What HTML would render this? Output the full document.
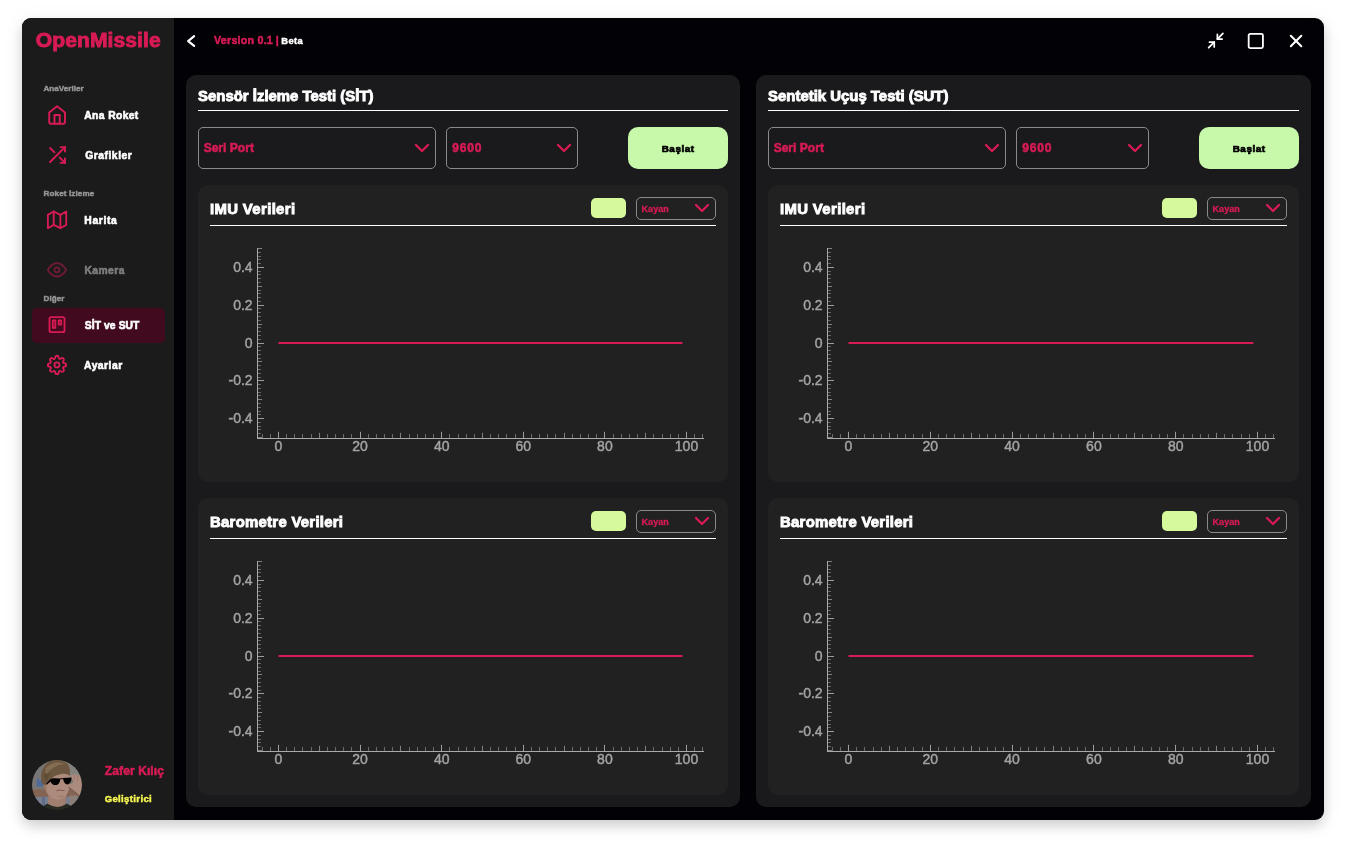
<!DOCTYPE html>
<html lang="tr"><head><meta charset="utf-8"><title>OpenMissile</title>
<style>
html,body{margin:0;padding:0;background:#ffffff;}
body{width:1346px;height:846px;overflow:hidden;position:relative;font-family:"Liberation Sans",sans-serif;font-weight:700;}
#win{will-change:transform;position:absolute;left:22px;top:18px;width:1302px;height:802px;background:#010106;border-radius:9px;
 box-shadow:0 6px 13px rgba(0,0,0,0.17),0 3px 24px rgba(0,0,0,0.05);}
.t{position:absolute;white-space:nowrap;display:block;}
.b{position:absolute;}
.ic{position:absolute;display:block;overflow:visible;}
</style></head><body>
<div id="win">
<div class="b" style="left:0.00px;top:0.00px;width:152.00px;height:802.00px;background:#1b1b1b;border-radius:9px 0 0 9px;"></div>
<span id="t0" class="t " style="left:13.75px;top:11.00px;font-size:21.1px;line-height:21.1px;color:#d81b55;letter-spacing:0.066px;-webkit-text-stroke:0.9px #d81b55;">OpenMissile</span>
<span id="t1" class="t " style="left:21.44px;top:67.00px;font-size:8.1px;line-height:8.1px;color:#979797;letter-spacing:0.031px;-webkit-text-stroke:0.4px #979797;">AnaVeriler</span>
<span id="t2" class="t " style="left:21.50px;top:172.00px;font-size:8.1px;line-height:8.1px;color:#979797;letter-spacing:0.115px;-webkit-text-stroke:0.4px #979797;">Roket İzleme</span>
<span id="t3" class="t " style="left:21.62px;top:277.00px;font-size:8.1px;line-height:8.1px;color:#979797;letter-spacing:0.052px;-webkit-text-stroke:0.4px #979797;">Diğer</span>
<div class="b" style="left:10.00px;top:290.00px;width:133.00px;height:35.00px;background:#420a1e;border-radius:5px;"></div>
<svg class="ic" style="left:24px;top:86px;" width="21" height="21" viewBox="0 0 24 24" fill="none" stroke="#d81b55" stroke-width="2.2" stroke-linecap="round" stroke-linejoin="round"><g transform="translate(0.686 0.629)"><path d="M3 9l9-7 9 7v11a2 2 0 0 1-2 2H5a2 2 0 0 1-2-2z"/><polyline points="9 22 9 12 15 12 15 22"/></g></svg>
<span id="t4" class="t " style="left:62.27px;top:93.00px;font-size:10.3px;line-height:10.3px;color:#ffffff;letter-spacing:0.388px;-webkit-text-stroke:0.6px #ffffff;">Ana Roket</span>
<svg class="ic" style="left:24px;top:126px;" width="21" height="21" viewBox="0 0 24 24" fill="none" stroke="#d81b55" stroke-width="2.2" stroke-linecap="round" stroke-linejoin="round"><g transform="translate(0.686 0.571)"><polyline points="16 3 21 3 21 8"/><line x1="4" y1="20" x2="21" y2="3"/><polyline points="21 16 21 21 16 21"/><line x1="15" y1="15" x2="21" y2="21"/><line x1="4" y1="4" x2="9" y2="9"/></g></svg>
<span id="t5" class="t " style="left:63.14px;top:133.00px;font-size:10.3px;line-height:10.3px;color:#ffffff;letter-spacing:0.541px;-webkit-text-stroke:0.6px #ffffff;">Grafikler</span>
<svg class="ic" style="left:25px;top:191px;" width="20" height="20" viewBox="0 0 24 24" fill="none" stroke="#d81b55" stroke-width="2.2" stroke-linecap="round" stroke-linejoin="round"><g transform="translate(0.060 1.020)"><polygon points="1 6 1 22 8 18 16 22 23 18 23 2 16 6 8 2 1 6"/><line x1="8" y1="2" x2="8" y2="18"/><line x1="16" y1="6" x2="16" y2="22"/></g></svg>
<span id="t6" class="t " style="left:62.37px;top:198.00px;font-size:10.3px;line-height:10.3px;color:#ffffff;letter-spacing:0.626px;-webkit-text-stroke:0.6px #ffffff;">Harita</span>
<svg class="ic" style="left:24px;top:241px;opacity:0.45;" width="20" height="20" viewBox="0 0 24 24" fill="none" stroke="#d81b55" stroke-width="2.2" stroke-linecap="round" stroke-linejoin="round"><g transform="translate(1.140 1.020)"><path d="M1 12s4-8 11-8 11 8 11 8-4 8-11 8-11-8-11-8z"/><circle cx="12" cy="12" r="3"/></g></svg>
<span id="t7" class="t " style="left:62.45px;top:248.00px;font-size:10.3px;line-height:10.3px;color:#7d7d7d;letter-spacing:0.454px;-webkit-text-stroke:0.6px #7d7d7d;">Kamera</span>
<svg class="ic" style="left:25px;top:296px;" width="20" height="20" viewBox="0 0 24 24" fill="none" stroke="#d81b55" stroke-width="2.2" stroke-linecap="round" stroke-linejoin="round"><g transform="translate(0.000 0.660)"><rect x="3" y="3" width="18" height="18" rx="2" ry="2"/><rect x="7" y="7" width="3" height="9"/><rect x="14" y="7" width="3" height="5"/></g></svg>
<span id="t8" class="t " style="left:62.82px;top:303.00px;font-size:10.3px;line-height:10.3px;color:#ffffff;letter-spacing:0.089px;-webkit-text-stroke:0.6px #ffffff;">SİT ve SUT</span>
<svg class="ic" style="left:24px;top:336px;" width="20" height="20" viewBox="0 0 24 24" fill="none" stroke="#d81b55" stroke-width="2.2" stroke-linecap="round" stroke-linejoin="round"><g transform="translate(1.140 1.140)"><circle cx="12" cy="12" r="3"/><path d="M19.4 15a1.65 1.65 0 0 0 .33 1.82l.06.06a2 2 0 0 1 0 2.83 2 2 0 0 1-2.83 0l-.06-.06a1.65 1.65 0 0 0-1.82-.33 1.65 1.65 0 0 0-1 1.51V21a2 2 0 0 1-2 2 2 2 0 0 1-2-2v-.09A1.65 1.65 0 0 0 9 19.4a1.65 1.65 0 0 0-1.82.33l-.06.06a2 2 0 0 1-2.83 0 2 2 0 0 1 0-2.83l.06-.06a1.65 1.65 0 0 0 .33-1.82 1.65 1.65 0 0 0-1.51-1H3a2 2 0 0 1-2-2 2 2 0 0 1 2-2h.09A1.65 1.65 0 0 0 4.6 9a1.65 1.65 0 0 0-.33-1.82l-.06-.06a2 2 0 0 1 0-2.83 2 2 0 0 1 2.83 0l.06.06a1.65 1.65 0 0 0 1.82.33H9a1.65 1.65 0 0 0 1-1.51V3a2 2 0 0 1 2-2 2 2 0 0 1 2 2v.09a1.65 1.65 0 0 0 1 1.51 1.65 1.65 0 0 0 1.82-.33l.06-.06a2 2 0 0 1 2.83 0 2 2 0 0 1 0 2.83l-.06.06a1.65 1.65 0 0 0-.33 1.82V9a1.65 1.65 0 0 0 1.51 1H21a2 2 0 0 1 2 2 2 2 0 0 1-2 2h-.09a1.65 1.65 0 0 0-1.51 1z"/></g></svg>
<span id="t9" class="t " style="left:62.09px;top:343.00px;font-size:10.3px;line-height:10.3px;color:#ffffff;letter-spacing:0.501px;-webkit-text-stroke:0.6px #ffffff;">Ayarlar</span>
<svg class="ic" style="left:10px;top:742px" width="50" height="50" viewBox="0 0 50 50">
<defs><clipPath id="avc"><circle cx="25" cy="25" r="25"/></clipPath>
<filter id="avb" x="-10%" y="-10%" width="120%" height="120%"><feGaussianBlur stdDeviation="0.75"/></filter>
<filter id="avs" x="-10%" y="-10%" width="120%" height="120%"><feGaussianBlur stdDeviation="0.4"/></filter></defs>
<g clip-path="url(#avc)"><g filter="url(#avb)">
<rect x="-3" y="-3" width="56" height="56" fill="#8b8a87"/>
<rect x="33" y="-3" width="20" height="20" fill="#9a9893"/>
<rect x="-3" y="29.5" width="56" height="7.5" fill="#9a7460"/>
<rect x="-3" y="36.8" width="56" height="9" fill="#8a93a8"/>
<rect x="37.5" y="35.5" width="8" height="9.5" fill="#a3968c"/>
<rect x="10" y="37" width="3" height="8" fill="#6f7f9f"/>
<path d="M4.4 26.6 L4.8 19 Q5 17.8 6.5 18.3 L8 21.3 L9.6 18.4 Q10.8 18 10.9 19.5 L11 26.6z" fill="#5b7ab3"/>
<path d="M8 50 Q10 45.5 16 43.5 L34 43.5 Q40 45 42 50 L42 54 L8 54z" fill="#2a2f28"/>
<path d="M16.5 34 L16 44 Q25 49.5 33.5 44.5 L34.5 33z" fill="#bd9482"/>
<path d="M13.2 21 Q12.3 29 15.5 34 Q19.5 39.5 26 39.8 Q31.5 39.5 34.8 34.5 Q37.6 30 37.6 24 L37.4 14 Q27 9 16 13z" fill="#caa18f"/>
<path d="M24.5 30.6 Q28.5 29.4 32.5 30.8" stroke="#8f5f55" stroke-width="0.9" fill="none"/>
<path d="M26.5 36.5 Q29 37.4 32 36" stroke="#b08674" stroke-width="0.8" fill="none"/>
<path d="M12.3 23.2 Q10.6 27.5 13.2 30.2 L14.6 29 L14.2 23z" fill="#b48873"/>
<path d="M9.4 22 Q7 9 16.5 2 Q27 -2.8 35.4 3.6 Q39 8.4 37.7 15.8 Q34.5 12.8 28 14.2 Q21 15.8 17.8 20.2 Q16 23.4 15.4 24.4 L12 24.8 Q10.2 24.6 9.4 22z" fill="#7f6549"/>
<path d="M13.5 8 Q22 -0.5 33 4 Q27 4 21 8 Q17 10.5 14 15z" fill="#9a805f"/>
<path d="M12 14 Q12.5 20 15 22.5 Q15 17 19 13z" fill="#6f573d"/>
<path d="M38 18.6 Q38 15 40.5 14.8 Q43 13.6 45.4 15 Q48.3 15.4 49.3 18.6 Q50.6 24 49.8 30 Q49 35.4 46.4 35.2 Q41 31 36.8 27.4 L37.4 24 Q41.6 24.4 41 20.6 Q40 19.6 38 18.6z" fill="#c9a392"/>
<path d="M36.6 27.2 Q41 30.4 46.8 35.2" stroke="#7b4d44" stroke-width="0.9" fill="none"/>
<path d="M42.5 15 L42.2 20 M45.6 15.6 L45.3 21" stroke="#a97f6f" stroke-width="0.6" fill="none"/>
<rect x="-3" y="-3" width="56" height="56" fill="#141414" opacity="0.16"/></g>
<g filter="url(#avs)">
<path d="M14 23.9 L18.2 19.2 Q19.6 17.9 23 18.2 L28.2 18.6 Q28.4 23.6 24.8 25 Q20.4 25.8 18.6 21.4 L15 24.6z" fill="#040404"/>
<path d="M31 18 L39.6 17.4 Q39.6 22.6 35.8 24.4 Q31.8 24.6 31 18z" fill="#040404"/>
<path d="M28 18.9 L31.4 18.5" stroke="#040404" stroke-width="0.9"/>
</g>
</g></svg>
<span id="t10" class="t " style="left:82.83px;top:747.00px;font-size:12px;line-height:12px;color:#d81b55;letter-spacing:0.105px;-webkit-text-stroke:0.55px #d81b55;">Zafer Kılıç</span>
<span id="t11" class="t " style="left:82.63px;top:776.00px;font-size:9.6px;line-height:9.6px;color:#f7f752;letter-spacing:0.338px;-webkit-text-stroke:0.45px #f7f752;">Geliştirici</span>
<svg class="ic" style="left:158px;top:12px;" width="21" height="21" viewBox="0 0 24 24" fill="none" stroke="#ffffff" stroke-width="2.5" stroke-linecap="round" stroke-linejoin="round"><g transform="translate(0.743 0.629)"><polyline points="15.4 17.6 8.6 12 15.4 6.4"/></g></svg>
<span id="t12" class="t " style="left:192.05px;top:17.00px;font-size:10.7px;line-height:10.7px;color:#d81b55;letter-spacing:0.233px;-webkit-text-stroke:0.55px #d81b55;">Version 0.1</span>
<span id="t13" class="t " style="left:253.68px;top:17.00px;font-size:10.7px;line-height:10.7px;color:#d81b55;letter-spacing:-0.946px;-webkit-text-stroke:0.55px #d81b55;">|</span>
<span id="t14" class="t " style="left:259.31px;top:18.00px;font-size:9.4px;line-height:9.4px;color:#ffffff;letter-spacing:0.366px;-webkit-text-stroke:0.45px #ffffff;">Beta</span>
<svg class="ic" style="left:1184px;top:13px;" width="19" height="19" viewBox="0 0 24 24" fill="none" stroke="#ffffff" stroke-width="2.2" stroke-linecap="round" stroke-linejoin="round"><g transform="translate(0.379 0.126)"><polyline points="4 14 10 14 10 20"/><polyline points="20 10 14 10 14 4"/><line x1="14" y1="10" x2="21" y2="3"/><line x1="3" y1="21" x2="10" y2="14"/></g></svg>
<svg class="ic" style="left:1224px;top:13px;" width="19" height="19" viewBox="0 0 24 24" fill="none" stroke="#ffffff" stroke-width="2.3" stroke-linecap="round" stroke-linejoin="round"><g transform="translate(0.379 0.632)"><rect x="3" y="3" width="18" height="18" rx="2" ry="2"/></g></svg>
<svg class="ic" style="left:1263px;top:12px;" width="21" height="21" viewBox="0 0 24 24" fill="none" stroke="#ffffff" stroke-width="2.3" stroke-linecap="round" stroke-linejoin="round"><g transform="translate(0.629 0.571)"><line x1="18" y1="6" x2="6" y2="18"/><line x1="6" y1="6" x2="18" y2="18"/></g></svg>
<div class="b" style="left:164.00px;top:57.00px;width:554.00px;height:732.00px;background:#1a1a1c;border-radius:10px;"></div>
<span id="t15" class="t " style="left:176.10px;top:71.00px;font-size:14.9px;line-height:14.9px;color:#ffffff;letter-spacing:0.010px;-webkit-text-stroke:0.9px #ffffff;">Sensör İzleme Testi (SİT)</span>
<div class="b" style="left:176.00px;top:92.00px;width:530.00px;height:1.00px;background:#ffffff;"></div>
<div class="b" style="left:176.00px;top:109.00px;width:238.00px;height:42.00px;border:1px solid #8a8a8a;border-radius:5px;box-sizing:border-box;"></div>
<span id="t16" class="t " style="left:181.65px;top:124.00px;font-size:12px;line-height:12px;color:#d81b55;letter-spacing:0.028px;-webkit-text-stroke:0.55px #d81b55;">Seri Port</span>
<svg class="ic" style="left:388px;top:118px;" width="24" height="24" viewBox="0 0 24 24" fill="none" stroke="#d81b55" stroke-width="2.3" stroke-linecap="round" stroke-linejoin="round"><g transform="translate(0.000 0.000)"><polyline points="6 9 12 15 18 9"/></g></svg>
<div class="b" style="left:424.00px;top:109.00px;width:132.00px;height:42.00px;border:1px solid #8a8a8a;border-radius:5px;box-sizing:border-box;"></div>
<span id="t17" class="t " style="left:430.19px;top:124.00px;font-size:12px;line-height:12px;color:#d81b55;letter-spacing:0.824px;-webkit-text-stroke:0.55px #d81b55;">9600</span>
<svg class="ic" style="left:530px;top:118px;" width="24" height="24" viewBox="0 0 24 24" fill="none" stroke="#d81b55" stroke-width="2.3" stroke-linecap="round" stroke-linejoin="round"><g transform="translate(0.000 0.000)"><polyline points="6 9 12 15 18 9"/></g></svg>
<div class="b" style="left:606.00px;top:109.00px;width:100.00px;height:42.00px;background:#c8f8aa;border-radius:10px;"></div>
<span id="t18" class="t " style="left:639.73px;top:126.00px;font-size:9.9px;line-height:9.9px;color:#000000;letter-spacing:0.518px;-webkit-text-stroke:0.7px #000000;">Başlat</span>
<div class="b" style="left:176.00px;top:167.00px;width:530.00px;height:297.00px;background:#212121;border-radius:10px;"></div>
<span id="t19" class="t " style="left:188.00px;top:184.00px;font-size:14.9px;line-height:14.9px;color:#ffffff;letter-spacing:0.359px;-webkit-text-stroke:0.9px #ffffff;">IMU Verileri</span>
<div class="b" style="left:188.00px;top:207.00px;width:506.00px;height:1.00px;background:#ffffff;"></div>
<div class="b" style="left:569.00px;top:180.00px;width:35.00px;height:20.00px;background:#d6f99c;border-radius:5px;"></div>
<div class="b" style="left:614.00px;top:179.00px;width:80.00px;height:23.00px;border:1px solid #8a8a8a;border-radius:5px;box-sizing:border-box;"></div>
<span id="t20" class="t " style="left:619.52px;top:187.00px;font-size:9px;line-height:9px;color:#d81b55;letter-spacing:0.055px;-webkit-text-stroke:0.3px #d81b55;">Kayan</span>
<svg class="ic" style="left:668px;top:178px;" width="24" height="24" viewBox="0 0 24 24" fill="none" stroke="#d81b55" stroke-width="2.3" stroke-linecap="round" stroke-linejoin="round"><g transform="translate(0.000 0.000)"><polyline points="6 9 12 15 18 9"/></g></svg>
<svg class="ic chart" style="left:198px;top:222px" width="500" height="222" viewBox="0 0 500 222" font-family="Liberation Sans, sans-serif" font-size="14" font-weight="400" fill="#a3a3a3" stroke="#a3a3a3" stroke-width="0.45"><path d="M38.0 178.50h6.0M38.0 140.50h6.0M38.0 103.50h6.0M38.0 65.50h6.0M38.0 27.50h6.0M58.50 198.0v-6.2M140.50 198.0v-6.2M221.50 198.0v-6.2M303.50 198.0v-6.2M384.50 198.0v-6.2M466.50 198.0v-6.2" stroke="#9c9c9c" stroke-width="1" fill="none"/><path d="M38.0 197.50h4.1M38.0 159.50h4.1M38.0 121.50h4.1M38.0 84.50h4.1M38.0 46.50h4.1M38.0 8.50h4.1M99.50 198.0v-5.2M180.50 198.0v-5.2M262.50 198.0v-5.2M344.50 198.0v-5.2M425.50 198.0v-5.2" stroke="#808080" stroke-width="1" fill="none"/><path d="M38.0 193.50h2.9M38.0 189.50h2.9M38.0 186.50h2.9M38.0 182.50h2.9M38.0 174.50h2.9M38.0 171.50h2.9M38.0 167.50h2.9M38.0 163.50h2.9M38.0 155.50h2.9M38.0 152.50h2.9M38.0 148.50h2.9M38.0 144.50h2.9M38.0 137.50h2.9M38.0 133.50h2.9M38.0 129.50h2.9M38.0 125.50h2.9M38.0 118.50h2.9M38.0 114.50h2.9M38.0 110.50h2.9M38.0 106.50h2.9M38.0 99.50h2.9M38.0 95.50h2.9M38.0 91.50h2.9M38.0 87.50h2.9M38.0 80.50h2.9M38.0 76.50h2.9M38.0 72.50h2.9M38.0 68.50h2.9M38.0 61.50h2.9M38.0 57.50h2.9M38.0 53.50h2.9M38.0 50.50h2.9M38.0 42.50h2.9M38.0 38.50h2.9M38.0 34.50h2.9M38.0 31.50h2.9M38.0 23.50h2.9M38.0 19.50h2.9M38.0 16.50h2.9M38.0 12.50h2.9M42.50 198.0v-4.0M50.50 198.0v-4.0M66.50 198.0v-4.0M74.50 198.0v-4.0M82.50 198.0v-4.0M91.50 198.0v-4.0M107.50 198.0v-4.0M115.50 198.0v-4.0M123.50 198.0v-4.0M131.50 198.0v-4.0M148.50 198.0v-4.0M156.50 198.0v-4.0M164.50 198.0v-4.0M172.50 198.0v-4.0M189.50 198.0v-4.0M197.50 198.0v-4.0M205.50 198.0v-4.0M213.50 198.0v-4.0M229.50 198.0v-4.0M238.50 198.0v-4.0M246.50 198.0v-4.0M254.50 198.0v-4.0M270.50 198.0v-4.0M278.50 198.0v-4.0M286.50 198.0v-4.0M295.50 198.0v-4.0M311.50 198.0v-4.0M319.50 198.0v-4.0M327.50 198.0v-4.0M335.50 198.0v-4.0M352.50 198.0v-4.0M360.50 198.0v-4.0M368.50 198.0v-4.0M376.50 198.0v-4.0M393.50 198.0v-4.0M401.50 198.0v-4.0M409.50 198.0v-4.0M417.50 198.0v-4.0M433.50 198.0v-4.0M442.50 198.0v-4.0M450.50 198.0v-4.0M458.50 198.0v-4.0M474.50 198.0v-4.0M482.50 198.0v-4.0" stroke="#6a6a6a" stroke-width="1" fill="none"/><path d="M37.5 8V199.0" stroke="#a9a9a9" stroke-width="1"/><path d="M37.0 198.5H484" stroke="#a9a9a9" stroke-width="1"/><path d="M58.50 103.05H462.42" stroke="#d81b55" stroke-width="1.9"/><text x="32.599999999999994" y="32.40" text-anchor="end">0.4</text><text x="32.599999999999994" y="70.40" text-anchor="end">0.2</text><text x="32.599999999999994" y="108.40" text-anchor="end">0</text><text x="32.599999999999994" y="145.40" text-anchor="end">-0.2</text><text x="32.599999999999994" y="183.40" text-anchor="end">-0.4</text><text x="58.50" y="211.3" text-anchor="middle">0</text><text x="140.10" y="211.3" text-anchor="middle">20</text><text x="221.70" y="211.3" text-anchor="middle">40</text><text x="303.30" y="211.3" text-anchor="middle">60</text><text x="384.90" y="211.3" text-anchor="middle">80</text><text x="466.50" y="211.3" text-anchor="middle">100</text></svg>
<div class="b" style="left:176.00px;top:480.00px;width:530.00px;height:297.00px;background:#212121;border-radius:10px;"></div>
<span id="t21" class="t " style="left:188.00px;top:497.00px;font-size:14.9px;line-height:14.9px;color:#ffffff;letter-spacing:0.277px;-webkit-text-stroke:0.9px #ffffff;">Barometre Verileri</span>
<div class="b" style="left:188.00px;top:520.00px;width:506.00px;height:1.00px;background:#ffffff;"></div>
<div class="b" style="left:569.00px;top:493.00px;width:35.00px;height:20.00px;background:#d6f99c;border-radius:5px;"></div>
<div class="b" style="left:614.00px;top:492.00px;width:80.00px;height:23.00px;border:1px solid #8a8a8a;border-radius:5px;box-sizing:border-box;"></div>
<span id="t22" class="t " style="left:619.52px;top:500.00px;font-size:9px;line-height:9px;color:#d81b55;letter-spacing:0.055px;-webkit-text-stroke:0.3px #d81b55;">Kayan</span>
<svg class="ic" style="left:668px;top:491px;" width="24" height="24" viewBox="0 0 24 24" fill="none" stroke="#d81b55" stroke-width="2.3" stroke-linecap="round" stroke-linejoin="round"><g transform="translate(0.000 0.000)"><polyline points="6 9 12 15 18 9"/></g></svg>
<svg class="ic chart" style="left:198px;top:535px" width="500" height="222" viewBox="0 0 500 222" font-family="Liberation Sans, sans-serif" font-size="14" font-weight="400" fill="#a3a3a3" stroke="#a3a3a3" stroke-width="0.45"><path d="M38.0 178.50h6.0M38.0 140.50h6.0M38.0 103.50h6.0M38.0 65.50h6.0M38.0 27.50h6.0M58.50 198.0v-6.2M140.50 198.0v-6.2M221.50 198.0v-6.2M303.50 198.0v-6.2M384.50 198.0v-6.2M466.50 198.0v-6.2" stroke="#9c9c9c" stroke-width="1" fill="none"/><path d="M38.0 197.50h4.1M38.0 159.50h4.1M38.0 121.50h4.1M38.0 84.50h4.1M38.0 46.50h4.1M38.0 8.50h4.1M99.50 198.0v-5.2M180.50 198.0v-5.2M262.50 198.0v-5.2M344.50 198.0v-5.2M425.50 198.0v-5.2" stroke="#808080" stroke-width="1" fill="none"/><path d="M38.0 193.50h2.9M38.0 189.50h2.9M38.0 186.50h2.9M38.0 182.50h2.9M38.0 174.50h2.9M38.0 171.50h2.9M38.0 167.50h2.9M38.0 163.50h2.9M38.0 155.50h2.9M38.0 152.50h2.9M38.0 148.50h2.9M38.0 144.50h2.9M38.0 137.50h2.9M38.0 133.50h2.9M38.0 129.50h2.9M38.0 125.50h2.9M38.0 118.50h2.9M38.0 114.50h2.9M38.0 110.50h2.9M38.0 106.50h2.9M38.0 99.50h2.9M38.0 95.50h2.9M38.0 91.50h2.9M38.0 87.50h2.9M38.0 80.50h2.9M38.0 76.50h2.9M38.0 72.50h2.9M38.0 68.50h2.9M38.0 61.50h2.9M38.0 57.50h2.9M38.0 53.50h2.9M38.0 50.50h2.9M38.0 42.50h2.9M38.0 38.50h2.9M38.0 34.50h2.9M38.0 31.50h2.9M38.0 23.50h2.9M38.0 19.50h2.9M38.0 16.50h2.9M38.0 12.50h2.9M42.50 198.0v-4.0M50.50 198.0v-4.0M66.50 198.0v-4.0M74.50 198.0v-4.0M82.50 198.0v-4.0M91.50 198.0v-4.0M107.50 198.0v-4.0M115.50 198.0v-4.0M123.50 198.0v-4.0M131.50 198.0v-4.0M148.50 198.0v-4.0M156.50 198.0v-4.0M164.50 198.0v-4.0M172.50 198.0v-4.0M189.50 198.0v-4.0M197.50 198.0v-4.0M205.50 198.0v-4.0M213.50 198.0v-4.0M229.50 198.0v-4.0M238.50 198.0v-4.0M246.50 198.0v-4.0M254.50 198.0v-4.0M270.50 198.0v-4.0M278.50 198.0v-4.0M286.50 198.0v-4.0M295.50 198.0v-4.0M311.50 198.0v-4.0M319.50 198.0v-4.0M327.50 198.0v-4.0M335.50 198.0v-4.0M352.50 198.0v-4.0M360.50 198.0v-4.0M368.50 198.0v-4.0M376.50 198.0v-4.0M393.50 198.0v-4.0M401.50 198.0v-4.0M409.50 198.0v-4.0M417.50 198.0v-4.0M433.50 198.0v-4.0M442.50 198.0v-4.0M450.50 198.0v-4.0M458.50 198.0v-4.0M474.50 198.0v-4.0M482.50 198.0v-4.0" stroke="#6a6a6a" stroke-width="1" fill="none"/><path d="M37.5 8V199.0" stroke="#a9a9a9" stroke-width="1"/><path d="M37.0 198.5H484" stroke="#a9a9a9" stroke-width="1"/><path d="M58.50 103.05H462.42" stroke="#d81b55" stroke-width="1.9"/><text x="32.599999999999994" y="32.40" text-anchor="end">0.4</text><text x="32.599999999999994" y="70.40" text-anchor="end">0.2</text><text x="32.599999999999994" y="108.40" text-anchor="end">0</text><text x="32.599999999999994" y="145.40" text-anchor="end">-0.2</text><text x="32.599999999999994" y="183.40" text-anchor="end">-0.4</text><text x="58.50" y="211.3" text-anchor="middle">0</text><text x="140.10" y="211.3" text-anchor="middle">20</text><text x="221.70" y="211.3" text-anchor="middle">40</text><text x="303.30" y="211.3" text-anchor="middle">60</text><text x="384.90" y="211.3" text-anchor="middle">80</text><text x="466.50" y="211.3" text-anchor="middle">100</text></svg>
<div class="b" style="left:734.00px;top:57.00px;width:555.00px;height:732.00px;background:#1a1a1c;border-radius:10px;"></div>
<span id="t23" class="t " style="left:746.10px;top:71.00px;font-size:14.9px;line-height:14.9px;color:#ffffff;letter-spacing:0.010px;-webkit-text-stroke:0.9px #ffffff;">Sentetik Uçuş Testi (SUT)</span>
<div class="b" style="left:746.00px;top:92.00px;width:531.00px;height:1.00px;background:#ffffff;"></div>
<div class="b" style="left:746.00px;top:109.00px;width:238.00px;height:42.00px;border:1px solid #8a8a8a;border-radius:5px;box-sizing:border-box;"></div>
<span id="t24" class="t " style="left:751.65px;top:124.00px;font-size:12px;line-height:12px;color:#d81b55;letter-spacing:0.028px;-webkit-text-stroke:0.55px #d81b55;">Seri Port</span>
<svg class="ic" style="left:958px;top:118px;" width="24" height="24" viewBox="0 0 24 24" fill="none" stroke="#d81b55" stroke-width="2.3" stroke-linecap="round" stroke-linejoin="round"><g transform="translate(0.000 0.000)"><polyline points="6 9 12 15 18 9"/></g></svg>
<div class="b" style="left:994.00px;top:109.00px;width:133.00px;height:42.00px;border:1px solid #8a8a8a;border-radius:5px;box-sizing:border-box;"></div>
<span id="t25" class="t " style="left:1000.19px;top:124.00px;font-size:12px;line-height:12px;color:#d81b55;letter-spacing:0.824px;-webkit-text-stroke:0.55px #d81b55;">9600</span>
<svg class="ic" style="left:1101px;top:118px;" width="24" height="24" viewBox="0 0 24 24" fill="none" stroke="#d81b55" stroke-width="2.3" stroke-linecap="round" stroke-linejoin="round"><g transform="translate(0.000 0.000)"><polyline points="6 9 12 15 18 9"/></g></svg>
<div class="b" style="left:1177.00px;top:109.00px;width:100.00px;height:42.00px;background:#c8f8aa;border-radius:10px;"></div>
<span id="t26" class="t " style="left:1210.73px;top:126.00px;font-size:9.9px;line-height:9.9px;color:#000000;letter-spacing:0.518px;-webkit-text-stroke:0.7px #000000;">Başlat</span>
<div class="b" style="left:746.00px;top:167.00px;width:531.00px;height:297.00px;background:#212121;border-radius:10px;"></div>
<span id="t27" class="t " style="left:758.00px;top:184.00px;font-size:14.9px;line-height:14.9px;color:#ffffff;letter-spacing:0.359px;-webkit-text-stroke:0.9px #ffffff;">IMU Verileri</span>
<div class="b" style="left:758.00px;top:207.00px;width:507.00px;height:1.00px;background:#ffffff;"></div>
<div class="b" style="left:1140.00px;top:180.00px;width:35.00px;height:20.00px;background:#d6f99c;border-radius:5px;"></div>
<div class="b" style="left:1185.00px;top:179.00px;width:80.00px;height:23.00px;border:1px solid #8a8a8a;border-radius:5px;box-sizing:border-box;"></div>
<span id="t28" class="t " style="left:1190.52px;top:187.00px;font-size:9px;line-height:9px;color:#d81b55;letter-spacing:0.055px;-webkit-text-stroke:0.3px #d81b55;">Kayan</span>
<svg class="ic" style="left:1239px;top:178px;" width="24" height="24" viewBox="0 0 24 24" fill="none" stroke="#d81b55" stroke-width="2.3" stroke-linecap="round" stroke-linejoin="round"><g transform="translate(0.000 0.000)"><polyline points="6 9 12 15 18 9"/></g></svg>
<svg class="ic chart" style="left:768px;top:222px" width="500" height="222" viewBox="0 0 500 222" font-family="Liberation Sans, sans-serif" font-size="14" font-weight="400" fill="#a3a3a3" stroke="#a3a3a3" stroke-width="0.45"><path d="M38.0 178.50h6.0M38.0 140.50h6.0M38.0 103.50h6.0M38.0 65.50h6.0M38.0 27.50h6.0M58.50 198.0v-6.2M140.50 198.0v-6.2M222.50 198.0v-6.2M303.50 198.0v-6.2M385.50 198.0v-6.2M467.50 198.0v-6.2" stroke="#9c9c9c" stroke-width="1" fill="none"/><path d="M38.0 197.50h4.1M38.0 159.50h4.1M38.0 121.50h4.1M38.0 84.50h4.1M38.0 46.50h4.1M38.0 8.50h4.1M99.50 198.0v-5.2M181.50 198.0v-5.2M263.50 198.0v-5.2M344.50 198.0v-5.2M426.50 198.0v-5.2" stroke="#808080" stroke-width="1" fill="none"/><path d="M38.0 193.50h2.9M38.0 189.50h2.9M38.0 186.50h2.9M38.0 182.50h2.9M38.0 174.50h2.9M38.0 171.50h2.9M38.0 167.50h2.9M38.0 163.50h2.9M38.0 155.50h2.9M38.0 152.50h2.9M38.0 148.50h2.9M38.0 144.50h2.9M38.0 137.50h2.9M38.0 133.50h2.9M38.0 129.50h2.9M38.0 125.50h2.9M38.0 118.50h2.9M38.0 114.50h2.9M38.0 110.50h2.9M38.0 106.50h2.9M38.0 99.50h2.9M38.0 95.50h2.9M38.0 91.50h2.9M38.0 87.50h2.9M38.0 80.50h2.9M38.0 76.50h2.9M38.0 72.50h2.9M38.0 68.50h2.9M38.0 61.50h2.9M38.0 57.50h2.9M38.0 53.50h2.9M38.0 50.50h2.9M38.0 42.50h2.9M38.0 38.50h2.9M38.0 34.50h2.9M38.0 31.50h2.9M38.0 23.50h2.9M38.0 19.50h2.9M38.0 16.50h2.9M38.0 12.50h2.9M42.50 198.0v-4.0M50.50 198.0v-4.0M66.50 198.0v-4.0M74.50 198.0v-4.0M83.50 198.0v-4.0M91.50 198.0v-4.0M107.50 198.0v-4.0M115.50 198.0v-4.0M123.50 198.0v-4.0M132.50 198.0v-4.0M148.50 198.0v-4.0M156.50 198.0v-4.0M164.50 198.0v-4.0M173.50 198.0v-4.0M189.50 198.0v-4.0M197.50 198.0v-4.0M205.50 198.0v-4.0M213.50 198.0v-4.0M230.50 198.0v-4.0M238.50 198.0v-4.0M246.50 198.0v-4.0M254.50 198.0v-4.0M271.50 198.0v-4.0M279.50 198.0v-4.0M287.50 198.0v-4.0M295.50 198.0v-4.0M312.50 198.0v-4.0M320.50 198.0v-4.0M328.50 198.0v-4.0M336.50 198.0v-4.0M352.50 198.0v-4.0M361.50 198.0v-4.0M369.50 198.0v-4.0M377.50 198.0v-4.0M393.50 198.0v-4.0M402.50 198.0v-4.0M410.50 198.0v-4.0M418.50 198.0v-4.0M434.50 198.0v-4.0M442.50 198.0v-4.0M451.50 198.0v-4.0M459.50 198.0v-4.0M475.50 198.0v-4.0M483.50 198.0v-4.0" stroke="#6a6a6a" stroke-width="1" fill="none"/><path d="M37.5 8V199.0" stroke="#a9a9a9" stroke-width="1"/><path d="M37.0 198.5H485" stroke="#a9a9a9" stroke-width="1"/><path d="M58.50 103.05H463.41" stroke="#d81b55" stroke-width="1.9"/><text x="32.599999999999994" y="32.40" text-anchor="end">0.4</text><text x="32.599999999999994" y="70.40" text-anchor="end">0.2</text><text x="32.599999999999994" y="108.40" text-anchor="end">0</text><text x="32.599999999999994" y="145.40" text-anchor="end">-0.2</text><text x="32.599999999999994" y="183.40" text-anchor="end">-0.4</text><text x="58.50" y="211.3" text-anchor="middle">0</text><text x="140.30" y="211.3" text-anchor="middle">20</text><text x="222.10" y="211.3" text-anchor="middle">40</text><text x="303.90" y="211.3" text-anchor="middle">60</text><text x="385.70" y="211.3" text-anchor="middle">80</text><text x="467.50" y="211.3" text-anchor="middle">100</text></svg>
<div class="b" style="left:746.00px;top:480.00px;width:531.00px;height:297.00px;background:#212121;border-radius:10px;"></div>
<span id="t29" class="t " style="left:758.00px;top:497.00px;font-size:14.9px;line-height:14.9px;color:#ffffff;letter-spacing:0.277px;-webkit-text-stroke:0.9px #ffffff;">Barometre Verileri</span>
<div class="b" style="left:758.00px;top:520.00px;width:507.00px;height:1.00px;background:#ffffff;"></div>
<div class="b" style="left:1140.00px;top:493.00px;width:35.00px;height:20.00px;background:#d6f99c;border-radius:5px;"></div>
<div class="b" style="left:1185.00px;top:492.00px;width:80.00px;height:23.00px;border:1px solid #8a8a8a;border-radius:5px;box-sizing:border-box;"></div>
<span id="t30" class="t " style="left:1190.52px;top:500.00px;font-size:9px;line-height:9px;color:#d81b55;letter-spacing:0.055px;-webkit-text-stroke:0.3px #d81b55;">Kayan</span>
<svg class="ic" style="left:1239px;top:491px;" width="24" height="24" viewBox="0 0 24 24" fill="none" stroke="#d81b55" stroke-width="2.3" stroke-linecap="round" stroke-linejoin="round"><g transform="translate(0.000 0.000)"><polyline points="6 9 12 15 18 9"/></g></svg>
<svg class="ic chart" style="left:768px;top:535px" width="500" height="222" viewBox="0 0 500 222" font-family="Liberation Sans, sans-serif" font-size="14" font-weight="400" fill="#a3a3a3" stroke="#a3a3a3" stroke-width="0.45"><path d="M38.0 178.50h6.0M38.0 140.50h6.0M38.0 103.50h6.0M38.0 65.50h6.0M38.0 27.50h6.0M58.50 198.0v-6.2M140.50 198.0v-6.2M222.50 198.0v-6.2M303.50 198.0v-6.2M385.50 198.0v-6.2M467.50 198.0v-6.2" stroke="#9c9c9c" stroke-width="1" fill="none"/><path d="M38.0 197.50h4.1M38.0 159.50h4.1M38.0 121.50h4.1M38.0 84.50h4.1M38.0 46.50h4.1M38.0 8.50h4.1M99.50 198.0v-5.2M181.50 198.0v-5.2M263.50 198.0v-5.2M344.50 198.0v-5.2M426.50 198.0v-5.2" stroke="#808080" stroke-width="1" fill="none"/><path d="M38.0 193.50h2.9M38.0 189.50h2.9M38.0 186.50h2.9M38.0 182.50h2.9M38.0 174.50h2.9M38.0 171.50h2.9M38.0 167.50h2.9M38.0 163.50h2.9M38.0 155.50h2.9M38.0 152.50h2.9M38.0 148.50h2.9M38.0 144.50h2.9M38.0 137.50h2.9M38.0 133.50h2.9M38.0 129.50h2.9M38.0 125.50h2.9M38.0 118.50h2.9M38.0 114.50h2.9M38.0 110.50h2.9M38.0 106.50h2.9M38.0 99.50h2.9M38.0 95.50h2.9M38.0 91.50h2.9M38.0 87.50h2.9M38.0 80.50h2.9M38.0 76.50h2.9M38.0 72.50h2.9M38.0 68.50h2.9M38.0 61.50h2.9M38.0 57.50h2.9M38.0 53.50h2.9M38.0 50.50h2.9M38.0 42.50h2.9M38.0 38.50h2.9M38.0 34.50h2.9M38.0 31.50h2.9M38.0 23.50h2.9M38.0 19.50h2.9M38.0 16.50h2.9M38.0 12.50h2.9M42.50 198.0v-4.0M50.50 198.0v-4.0M66.50 198.0v-4.0M74.50 198.0v-4.0M83.50 198.0v-4.0M91.50 198.0v-4.0M107.50 198.0v-4.0M115.50 198.0v-4.0M123.50 198.0v-4.0M132.50 198.0v-4.0M148.50 198.0v-4.0M156.50 198.0v-4.0M164.50 198.0v-4.0M173.50 198.0v-4.0M189.50 198.0v-4.0M197.50 198.0v-4.0M205.50 198.0v-4.0M213.50 198.0v-4.0M230.50 198.0v-4.0M238.50 198.0v-4.0M246.50 198.0v-4.0M254.50 198.0v-4.0M271.50 198.0v-4.0M279.50 198.0v-4.0M287.50 198.0v-4.0M295.50 198.0v-4.0M312.50 198.0v-4.0M320.50 198.0v-4.0M328.50 198.0v-4.0M336.50 198.0v-4.0M352.50 198.0v-4.0M361.50 198.0v-4.0M369.50 198.0v-4.0M377.50 198.0v-4.0M393.50 198.0v-4.0M402.50 198.0v-4.0M410.50 198.0v-4.0M418.50 198.0v-4.0M434.50 198.0v-4.0M442.50 198.0v-4.0M451.50 198.0v-4.0M459.50 198.0v-4.0M475.50 198.0v-4.0M483.50 198.0v-4.0" stroke="#6a6a6a" stroke-width="1" fill="none"/><path d="M37.5 8V199.0" stroke="#a9a9a9" stroke-width="1"/><path d="M37.0 198.5H485" stroke="#a9a9a9" stroke-width="1"/><path d="M58.50 103.05H463.41" stroke="#d81b55" stroke-width="1.9"/><text x="32.599999999999994" y="32.40" text-anchor="end">0.4</text><text x="32.599999999999994" y="70.40" text-anchor="end">0.2</text><text x="32.599999999999994" y="108.40" text-anchor="end">0</text><text x="32.599999999999994" y="145.40" text-anchor="end">-0.2</text><text x="32.599999999999994" y="183.40" text-anchor="end">-0.4</text><text x="58.50" y="211.3" text-anchor="middle">0</text><text x="140.30" y="211.3" text-anchor="middle">20</text><text x="222.10" y="211.3" text-anchor="middle">40</text><text x="303.90" y="211.3" text-anchor="middle">60</text><text x="385.70" y="211.3" text-anchor="middle">80</text><text x="467.50" y="211.3" text-anchor="middle">100</text></svg>
</div>
</body></html>
